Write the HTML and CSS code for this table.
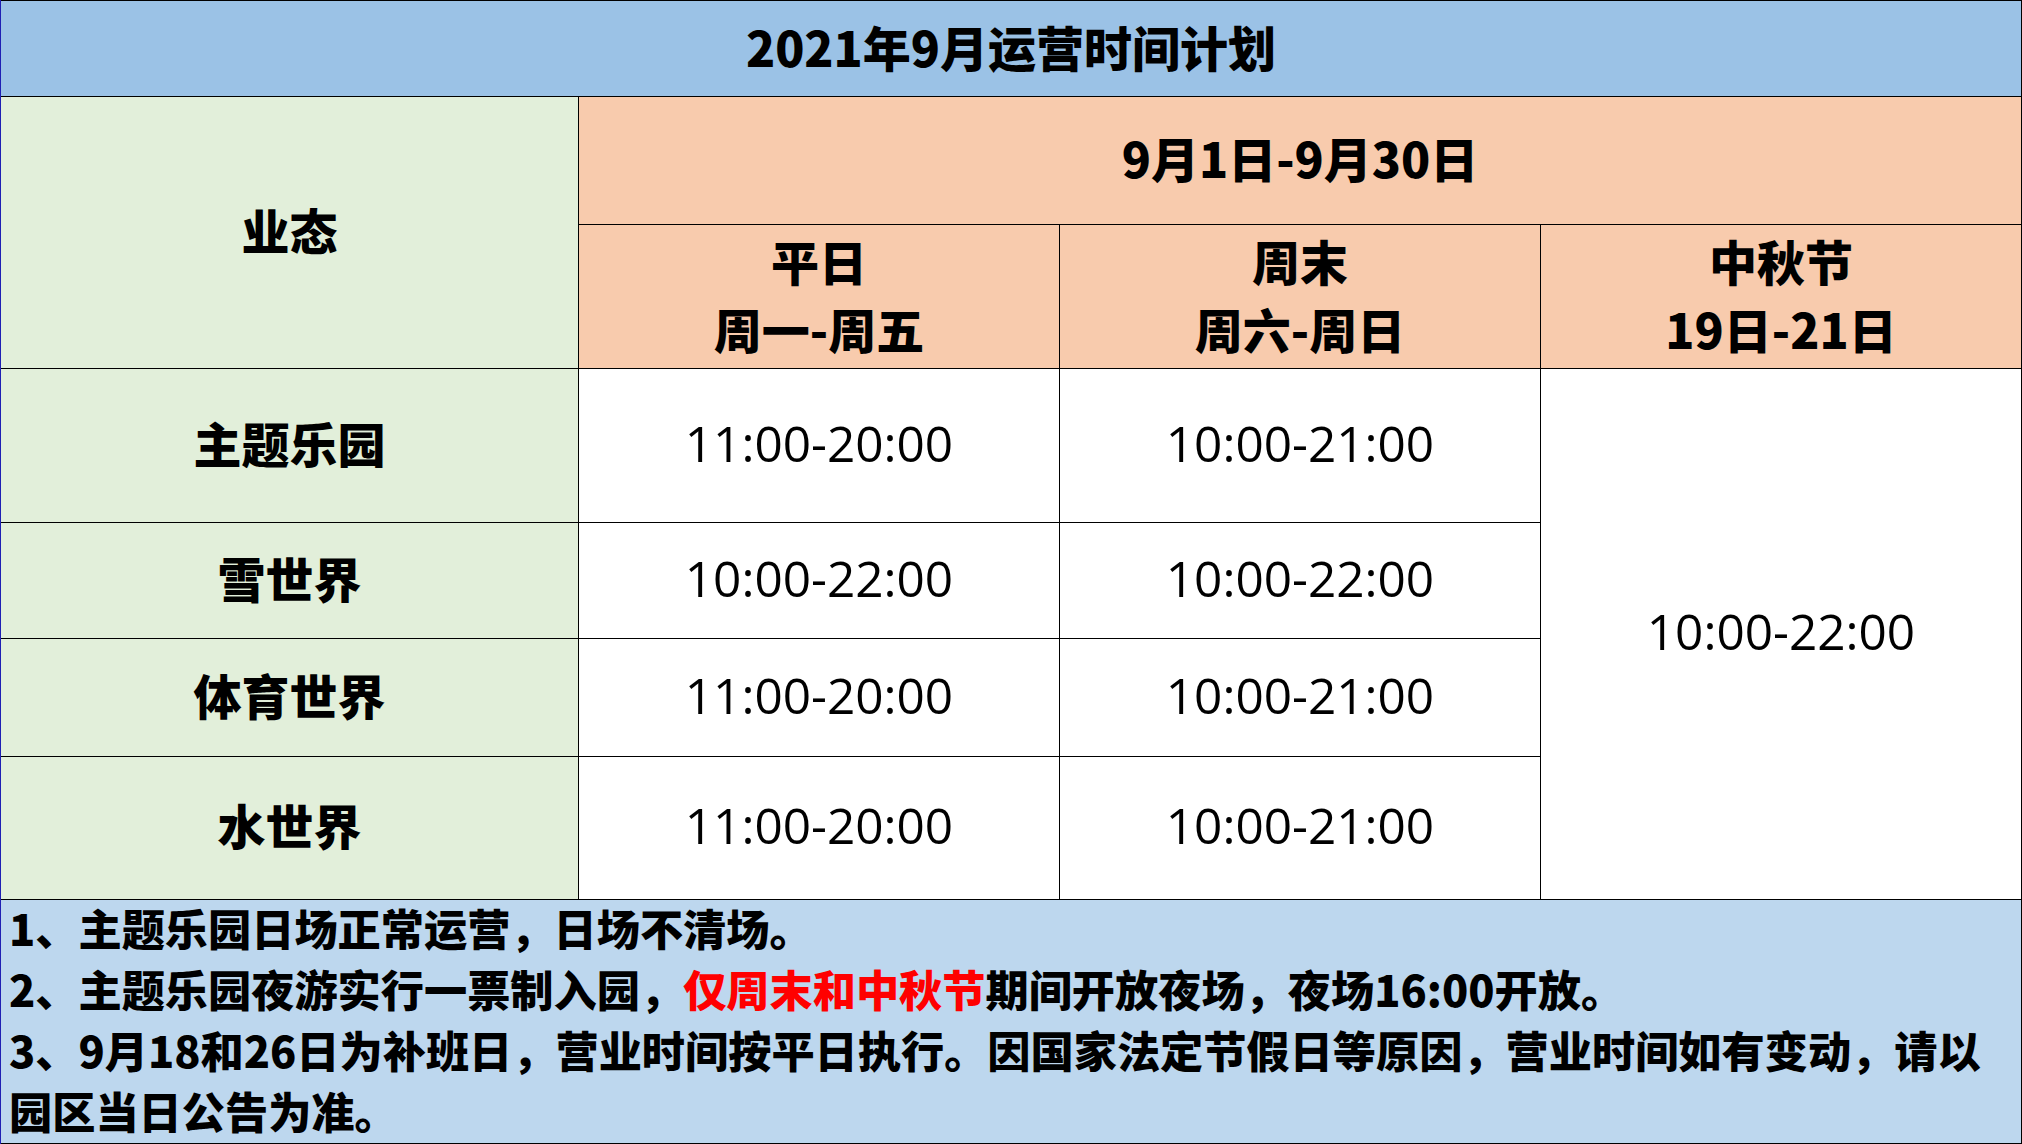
FILE: index.html
```html
<!DOCTYPE html>
<html lang="zh-CN">
<head>
<meta charset="utf-8">
<title>2021年9月运营时间计划</title>
<link rel="stylesheet" href="styles.css">
</head>
<body>
<div class="sheet">
  <div class="cell title">2021年9月运营时间计划</div>
  <div class="cell label kind">业态</div>
  <div class="cell head range">9月1日-9月30日</div>
  <div class="cell head sub">平日<br>周一-周五</div>
  <div class="cell head sub">周末<br>周六-周日</div>
  <div class="cell head sub">中秋节<br>19日-21日</div>

  <div class="cell label">主题乐园</div>
  <div class="cell time">11:00-20:00</div>
  <div class="cell time">10:00-21:00</div>
  <div class="cell time festival">10:00-22:00</div>

  <div class="cell label">雪世界</div>
  <div class="cell time">10:00-22:00</div>
  <div class="cell time">10:00-22:00</div>

  <div class="cell label">体育世界</div>
  <div class="cell time">11:00-20:00</div>
  <div class="cell time">10:00-21:00</div>

  <div class="cell label">水世界</div>
  <div class="cell time">11:00-20:00</div>
  <div class="cell time">10:00-21:00</div>

  <div class="cell notes">
    <p>1、主题乐园日场正常运营，日场不清场。</p>
    <p>2、主题乐园夜游实行一票制入园，<span class="red">仅周末和中秋节</span>期间开放夜场，夜场16:00开放。</p>
    <p>3、9月18和26日为补班日，营业时间按平日执行。因国家法定节假日等原因，营业时间如有变动，请以园区当日公告为准。</p>
  </div>
</div>
</body>
</html>
```

FILE: styles.css
```css
html, body {
  margin: 0;
  padding: 0;
  background: #ffffff;
}

body {
  width: 2022px;
  height: 1144px;
  overflow: hidden;
  font-family: "Noto Sans CJK SC", "Noto Sans", sans-serif;
  color: #000000;
}

.sheet {
  box-sizing: border-box;
  width: 2022px;
  height: 1144px;
  display: grid;
  grid-template-columns: 577px 480px 480px 480px;
  grid-template-rows: 95px 127px 143px 153px 115px 117px 142px 243px;
  gap: 1px;
  padding: 1px 1px 1px 0;
  border-left: 1px solid #1f1fb4;
  background: #000000;
}

.cell {
  box-sizing: border-box;
  display: flex;
  align-items: center;
  justify-content: center;
  text-align: center;
  background: #ffffff;
  padding-bottom: 8px;
}

.title {
  grid-column: 1 / 5;
  background: #9bc2e6;
  font-size: 48px;
  font-weight: 900;
  padding-bottom: 6px;
}

.label {
  background: #e2efda;
  font-size: 48px;
  font-weight: 900;
}

.kind {
  grid-row: 2 / 4;
}

.head {
  background: #f8cbad;
  font-weight: 900;
  font-size: 48px;
}

.range {
  grid-column: 2 / 5;
}

.sub {
  line-height: 68px;
  padding-bottom: 6px;
}

.time {
  font-family: "Open Sans", "Noto Sans", sans-serif;
  font-size: 49.5px;
  font-weight: 400;
  padding-bottom: 6px;
}

.festival {
  grid-column: 4;
  grid-row: 4 / 8;
}

.notes {
  grid-column: 1 / 5;
  display: block;
  text-align: left;
  background: #bdd7ee;
  font-size: 43.2px;
  font-weight: 900;
  line-height: 61px;
  padding: 0 36px 0 8px;
}

.notes p {
  margin: 0;
}

.notes p:first-child {
  margin-top: -3px;
}

.red {
  color: #ff0000;
}
```
